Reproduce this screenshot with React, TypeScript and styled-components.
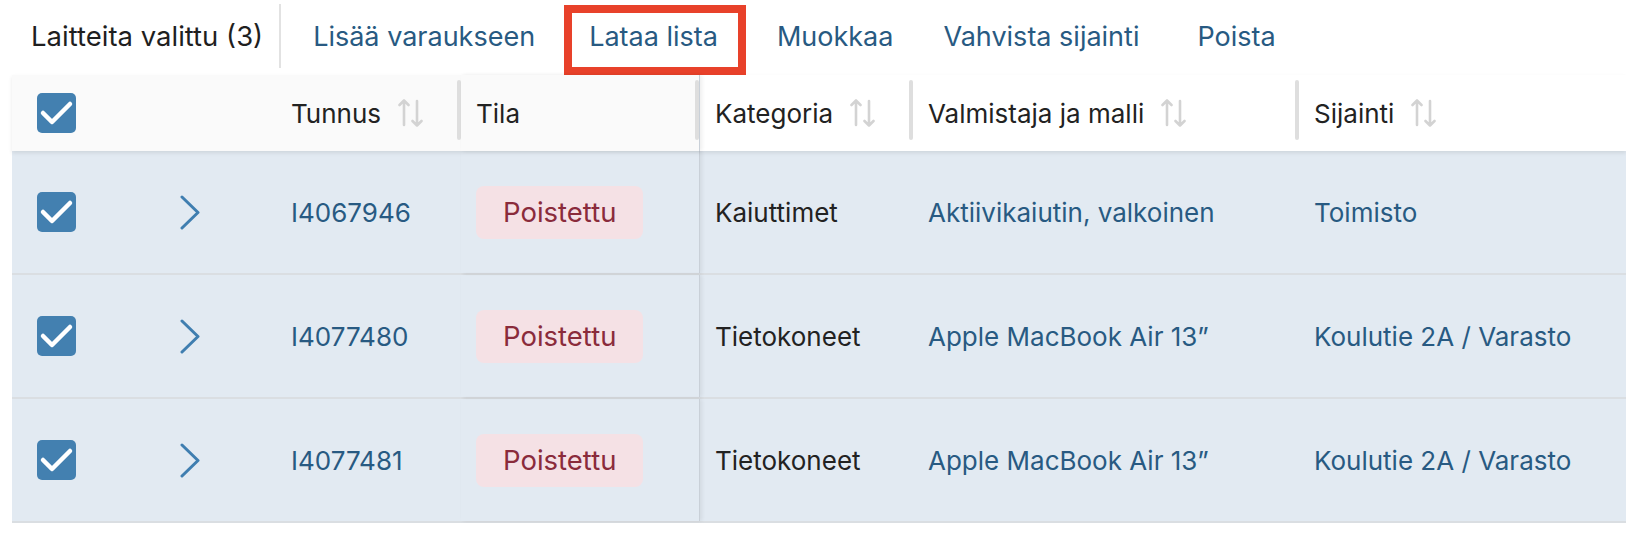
import styled, { createGlobalStyle } from 'styled-components'

const GlobalStyle = createGlobalStyle`
  body {
    margin: 0;
    background: #ffffff;
    font-family: Inter, 'Noto Sans', sans-serif;
    -webkit-font-smoothing: antialiased;
  }
`

const Page = styled.div`
  padding-left: 12px;
`

const Toolbar = styled.div`
  display: flex;
  align-items: center;
  height: 75px;
  padding-left: 19px;
`

const SelectedLabel = styled.span`
  font-size: 27.5px;
  color: #1f1f1f;
  padding: 0 16px 3px 0;
`

const Divider = styled.span`
  align-self: flex-start;
  margin: 4px 7px 0 0;
  width: 2px;
  height: 64px;
  background: #e2e2e2;
`

const ActionButton = styled.button<{ $highlighted?: boolean; $space?: number }>`
  display: flex;
  align-items: center;
  box-sizing: border-box;
  font-family: inherit;
  font-size: 27px;
  color: #285a82;
  background: transparent;
  cursor: pointer;
  ${({ $highlighted, $space }) =>
    $highlighted
      ? `
    align-self: flex-start;
    margin: 5px 6px 0 0;
    height: 70px;
    border: 8px solid #e8412a;
    padding: 0 20px 8px 17px;
  `
      : `
    margin-right: ${$space ?? 4}px;
    height: 75px;
    border: none;
    padding: 0 25px 3px;
  `}
`

const columns = '128px 136px 185px 239px 213px 386px 1fr'

const HeaderRow = styled.div`
  display: grid;
  grid-template-columns: ${columns};
  height: 76px;
  position: relative;
  z-index: 2;
  box-shadow: 0 2px 4px rgba(0, 0, 0, 0.09);
`

const Row = styled.div`
  display: grid;
  grid-template-columns: ${columns};
  height: 124px;
  box-sizing: border-box;
  background: #e2eaf2;
  border-bottom: 2px solid #dadee2;
`

const Cell = styled.div<{ $pad?: number; $pinned?: boolean; $edge?: boolean }>`
  display: flex;
  align-items: center;
  min-width: 0;
  padding-left: ${({ $pad }) => $pad ?? 15}px;
  font-size: 26px;
  color: #222222;
  white-space: nowrap;
  ${({ $edge }) =>
    $edge &&
    `
    position: relative;
    z-index: 1;
    border-right: 1px solid #c9d0d8;
    box-shadow: 2px 0 4px rgba(0, 0, 0, 0.07);
  `}
`

const HeaderCell = styled(Cell)`
  background: ${({ $pinned }) => ($pinned ? '#fafafa' : '#ffffff')};
`

const HeaderLabel = styled.span`
  font-size: 26px;
  color: #222222;
`

const Resizer = styled.span`
  margin-left: auto;
  width: 4px;
  height: 60px;
  margin-top: -6px;
  border-radius: 2px;
  background: #dedede;
`

const SortWrap = styled.span`
  display: inline-flex;
  margin-left: 17px;
`

const LinkText = styled.span`
  color: #285a82;
`

const StatusBadge = styled.span`
  display: inline-flex;
  align-items: center;
  height: 53px;
  padding: 0 27px;
  border-radius: 8px;
  background: #f5e1e5;
  color: #8a2b3b;
  font-size: 27.5px;
`

const Checkbox = () => (
  <svg width="39" height="40" viewBox="0 0 39 40">
    <rect x="0" y="0" width="39" height="40" rx="5" fill="#4380b0" />
    <polyline
      points="6,20 15,29 33,11"
      fill="none"
      stroke="#ffffff"
      strokeWidth="4.5"
      strokeLinecap="round"
      strokeLinejoin="round"
    />
  </svg>
)

const Chevron = () => (
  <svg width="20" height="35" viewBox="0 0 20 35">
    <path
      d="M2 2 L18 17.5 L2 33"
      fill="none"
      stroke="#3f7eb0"
      strokeWidth="3"
      strokeLinecap="round"
      strokeLinejoin="round"
    />
  </svg>
)

const SortIcon = () => (
  <SortWrap>
    <svg width="25" height="30" viewBox="0 0 25 30" fill="none" stroke="#d3d3d3" strokeWidth="2.6" strokeLinecap="round" strokeLinejoin="round">
      <path d="M6 27V2.5M1.5 7 6 2.5 10.5 7" />
      <path d="M19 3v24.5M14.5 23 19 27.5 23.5 23" />
    </svg>
  </SortWrap>
)

const rows = [
  { id: 'I4067946', category: 'Kaiuttimet', model: 'Aktiivikaiutin, valkoinen', location: 'Toimisto' },
  { id: 'I4077480', category: 'Tietokoneet', model: 'Apple MacBook Air 13\u201d', location: 'Koulutie 2A / Varasto' },
  { id: 'I4077481', category: 'Tietokoneet', model: 'Apple MacBook Air 13\u201d', location: 'Koulutie 2A / Varasto' },
]

export default function App() {
  return (
    <Page>
      <GlobalStyle />
      <Toolbar>
        <SelectedLabel>Laitteita valittu (3)</SelectedLabel>
        <Divider />
        <ActionButton>Lisää varaukseen</ActionButton>
        <ActionButton $highlighted>Lataa lista</ActionButton>
        <ActionButton $space={0}>Muokkaa</ActionButton>
        <ActionButton $space={8}>Vahvista sijainti</ActionButton>
        <ActionButton>Poista</ActionButton>
      </Toolbar>
      <HeaderRow>
        <HeaderCell $pinned $pad={25}>
          <Checkbox />
        </HeaderCell>
        <HeaderCell $pinned />
        <HeaderCell $pinned>
          <HeaderLabel>Tunnus</HeaderLabel>
          <SortIcon />
          <Resizer />
        </HeaderCell>
        <HeaderCell $pinned $edge>
          <HeaderLabel>Tila</HeaderLabel>
          <Resizer />
        </HeaderCell>
        <HeaderCell>
          <HeaderLabel>Kategoria</HeaderLabel>
          <SortIcon />
          <Resizer />
        </HeaderCell>
        <HeaderCell>
          <HeaderLabel>Valmistaja ja malli</HeaderLabel>
          <SortIcon />
          <Resizer />
        </HeaderCell>
        <HeaderCell>
          <HeaderLabel>Sijainti</HeaderLabel>
          <SortIcon />
        </HeaderCell>
      </HeaderRow>
      {rows.map((r) => (
        <Row key={r.id}>
          <Cell $pad={25}>
            <Checkbox />
          </Cell>
          <Cell $pad={40}>
            <Chevron />
          </Cell>
          <Cell>
            <LinkText>{r.id}</LinkText>
          </Cell>
          <Cell $edge>
            <StatusBadge>Poistettu</StatusBadge>
          </Cell>
          <Cell>{r.category}</Cell>
          <Cell>
            <LinkText>{r.model}</LinkText>
          </Cell>
          <Cell>
            <LinkText>{r.location}</LinkText>
          </Cell>
        </Row>
      ))}
    </Page>
  )
}
